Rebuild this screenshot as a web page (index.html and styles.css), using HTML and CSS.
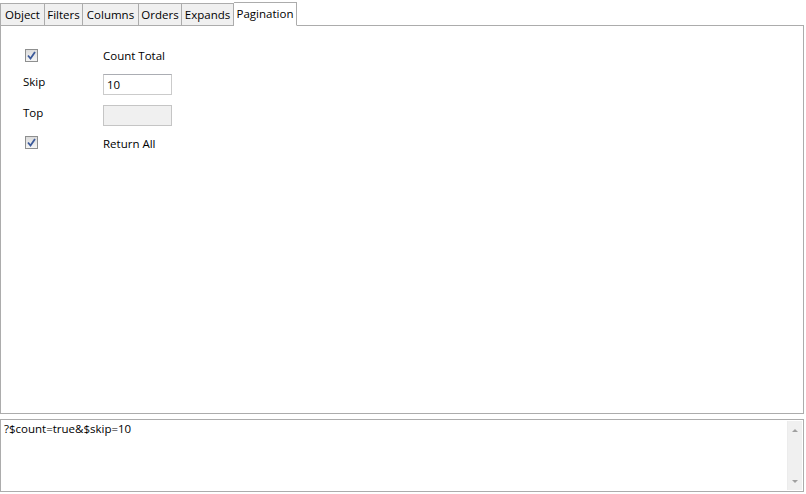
FILE: index.html
```html
<!DOCTYPE html>
<html>
<head>
<meta charset="utf-8">
<link rel="stylesheet" href="styles.css">
</head>
<body>
<div class="app">
  <div class="tabs">
    <div class="tab first w-object">Object</div>
    <div class="tab w-filters">Filters</div>
    <div class="tab w-columns">Columns</div>
    <div class="tab w-orders">Orders</div>
    <div class="tab w-expands">Expands</div>
    <div class="tab active w-pagination">Pagination</div>
  </div>
  <div class="panel">
    <div class="form">
      <div class="row row-check">
        <div class="cell-left"><span class="check"><svg width="9" height="9" viewBox="0 0 9 9"><path d="M1 4.5 L3.5 7.5 L8 1" fill="none" stroke="#3c5a9a" stroke-width="1.8"/></svg></span></div>
        <div class="cell-right">Count Total</div>
      </div>
      <div class="row row-input">
        <div class="cell-left">Skip</div>
        <div class="cell-right"><div class="input">10</div></div>
      </div>
      <div class="row row-input">
        <div class="cell-left">Top</div>
        <div class="cell-right"><div class="input disabled"></div></div>
      </div>
      <div class="row row-check last">
        <div class="cell-left"><span class="check"><svg width="9" height="9" viewBox="0 0 9 9"><path d="M1 4.5 L3.5 7.5 L8 1" fill="none" stroke="#3c5a9a" stroke-width="1.8"/></svg></span></div>
        <div class="cell-right">Return All</div>
      </div>
    </div>
  </div>
  <div class="output">
    <div class="output-text">?$count=true&amp;$skip=10</div>
    <div class="scrollbar">
      <span class="arrow up"></span>
      <span class="arrow down"></span>
    </div>
  </div>
</div>
</body>
</html>
```
FILE: styles.css
```css
html, body {
  margin: 0;
  padding: 0;
  background: #fff;
}
body {
  font-family: "Open Sans", "Noto Sans", sans-serif;
  font-size: 11.5px;
  color: #000;
}
.app {
  width: 804px;
  height: 494px;
  display: flex;
  flex-direction: column;
  padding-top: 2px;
  box-sizing: border-box;
}
.tabs {
  display: flex;
  height: 24px;
  align-items: flex-end;
  position: relative;
  z-index: 1;
  margin-bottom: -1px;
}
.tab {
  height: 23px;
  line-height: 21px;
  box-sizing: border-box;
  padding: 0;
  text-align: center;
  background: #f0f0f0;
  border: 1px solid #acacac;
  border-left: none;
  border-bottom: 1px solid #acacac;
  white-space: nowrap;
}
.tab.first {
  border-left: 1px solid #acacac;
}
.tab.active {
  height: 24px;
  line-height: 22px;
  background: #fff;
  border-bottom: 1px solid #fff;
}
.w-object { width: 45px; }
.w-filters { width: 38px; }
.w-columns { width: 56px; }
.w-orders { width: 43px; }
.w-expands { width: 52px; }
.w-pagination { width: 63px; }
.panel {
  height: 389px;
  border: 1px solid #acacac;
  background: #fff;
  box-sizing: border-box;
}
.form {
  padding-top: 21px;
  display: flex;
  flex-direction: column;
}
.row {
  display: flex;
  align-items: center;
}
.row-check {
  height: 16px;
}
.row-input {
  height: 31px;
}
.row-check + .row-input {
  margin-top: 6px;
}
.row-input + .row-check {
  margin-top: 3px;
}
.cell-left {
  width: 80px;
  padding-left: 22px;
}
.row-input .cell-left {
  margin-top: -7px;
}
.row-check.last .cell-right {
  margin-top: 2px;
}
.check {
  display: flex;
  align-items: center;
  justify-content: center;
  width: 11px;
  height: 11px;
  border: 1px solid #8e8f8f;
  background: linear-gradient(#dcdcdc, #f5f5f5);
  margin-left: 2px;
}
.input {
  width: 69px;
  height: 21px;
  box-sizing: border-box;
  border: 1px solid #cbcbcb;
  border-top-color: #abadb3;
  line-height: 19px;
  padding-left: 3px;
  background: #fff;
}
.input.disabled {
  background: #f0f0f0;
  border-color: #c5c5c5;
}
.output {
  margin-top: 5px;
  height: 73px;
  border: 1px solid #acacac;
  box-sizing: border-box;
  display: flex;
  justify-content: space-between;
}
.output-text {
  padding: 1px 0 0 3px;
  line-height: 16px;
}
.scrollbar {
  width: 15px;
  margin: 1px 1px 1px 0;
  background: #f0f0f0;
  border-left: 1px solid #ececec;
  display: flex;
  flex-direction: column;
  justify-content: space-between;
  align-items: center;
  padding: 8px 0 7px;
  box-sizing: border-box;
}
.arrow {
  width: 0;
  height: 0;
  border-left: 3px solid transparent;
  border-right: 3px solid transparent;
}
.arrow.up {
  border-bottom: 3px solid #a0a0a0;
}
.arrow.down {
  border-top: 3px solid #a0a0a0;
}
```
